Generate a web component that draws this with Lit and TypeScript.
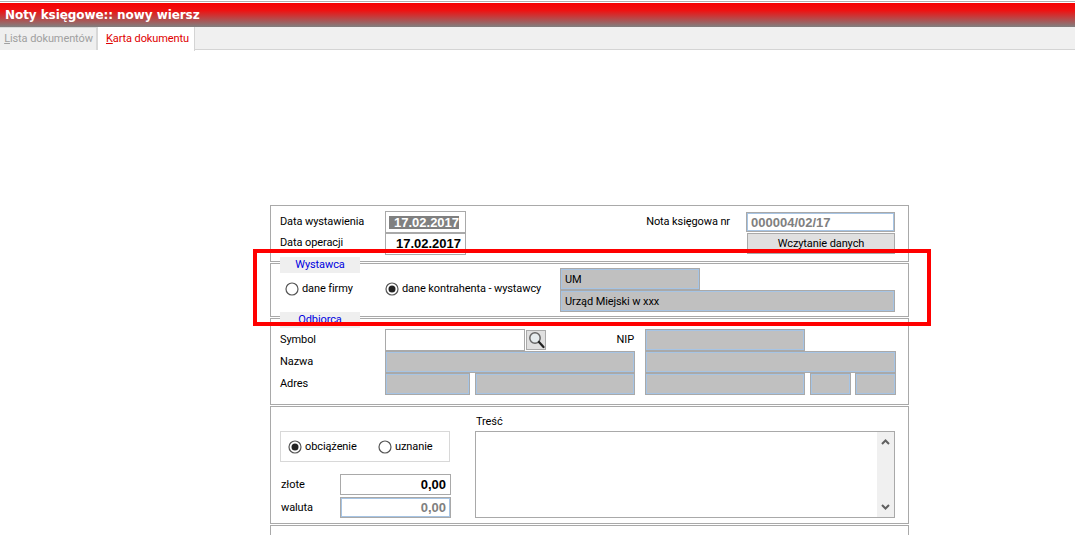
import { LitElement, html, css, svg } from "lit";
import { customElement } from "lit/decorators.js";

const radio = (on: boolean) => html`<svg class="radio" width="14" height="14" viewBox="0 0 14 14">
  <circle cx="7" cy="7" r="6" fill="#fff" stroke="#555" stroke-width="1.2"></circle>
  ${on ? svg`<circle cx="7" cy="7" r="3.5" fill="#222"></circle>` : ""}
</svg>`;

@customElement("app-root")
export class AppRoot extends LitElement {
  static styles = css`
    :host { display: block; width: 1075px; height: 535px; overflow: hidden; position: relative; background: #fff;
      font-family: Roboto, "Liberation Sans", Arial, sans-serif; font-size: 11px; letter-spacing: -0.1px; color: #000; white-space: nowrap; }
    .top { height: 3px; box-sizing: border-box; background: #fff; border-top: 1px solid #fff; }
    .top div { height: 1px; background: #b0b0b0; }
    .titlebar { height: 24px; box-sizing: border-box; background: linear-gradient(#f60000 0%, #f01010 30%, #808080 100%);
      color: #fff; font: bold 12px "DejaVu Sans", sans-serif; letter-spacing: -0.07px; display: flex; align-items: center; padding-left: 5px; }
    .tabs { height: 23px; box-sizing: border-box; background: #f0f0f0; border-bottom: 1px solid #d4d4d4; display: flex; }
    .tab { box-sizing: border-box; height: 23px; display: flex; align-items: center; justify-content: center; padding-bottom: 2px; }
    .tab u { text-decoration: underline; }
    .t1 { width: 98px; color: #a0a0a0; border: 1px solid #d8d8d8; border-width: 1px 2px 0 0; background: #efefef; padding-left: 1px; }
    .t2 { width: 97px; color: #e00000; background: #fff; border-right: 1px solid #d4d4d4; margin-bottom: -1px; height: 24px; padding-left: 3px; }
    .form { margin: 155px 0 0 270px; width: 639px; display: flex; flex-direction: column; }
    .panel { box-sizing: border-box; border: 1px solid #a9a9a9; position: relative; }
    .p1 { height: 57px; margin-bottom: 1px; }
    .p2 { height: 54px; margin-bottom: 1px; }
    .p3 { height: 87px; margin-bottom: 1px; }
    .p4 { height: 118px; margin-bottom: 1px; }
    .p5 { height: 40px; }
    .legend { position: absolute; left: 9px; top: -7px; width: 80px; height: 16px; background: #efefef; color: #0000e0; text-align: center; line-height: 15px; }
    .row { display: flex; align-items: center; box-sizing: border-box; }
    .lbl { width: 114px; padding: 0 0 2px 9px; box-sizing: border-box; flex: none; }
    .f { box-sizing: border-box; border: 1px solid #a9a9a9; flex: none; height: 22px; display: flex; align-items: center; }
    .ro { background: #c0c0c0; box-shadow: inset 0 0 0 1px #a6c4e4; padding-left: 4px; }
    .w { background: #fff; }
    .date { width: 81px; height: 22px; font: bold 13px "Liberation Sans", sans-serif; letter-spacing: 0; justify-content: flex-end; padding-right: 4px; }
    .sel { background: #808080; color: #fff; padding-left: 5px; margin-right: 2px; line-height: 13px; width: 65px; white-space: nowrap; }
    .p1 .r1 { padding-top: 5px; height: 27px; }
    .p1 .r2 { height: 21px; }
    .nr { margin-left: auto; margin-right: 16px; padding-bottom: 2px; }
    .nrin { width: 149px; height: 20px; margin-right: 13px; background: #fff; box-shadow: inset 0 0 0 1px #a6c4e4; color: #808080; font: bold 13px "Liberation Sans", sans-serif; letter-spacing: 0; padding-left: 4px; }
    .btn { width: 148px; height: 21px; margin: 0 13px 0 auto; background: #e0e0e0; justify-content: center; }
    .p2 .content { display: flex; align-items: center; height: 52px; padding-left: 14px; }
    .opt { display: flex; align-items: center; gap: 3px; flex: none; }
    .p2 .opt { margin-bottom: 3px; }
    .opt1 { width: 100px; }
    .opt2 { width: 175px; }
    .opts { display: flex; flex-direction: column; width: 335px; }
    .um { width: 140px; }
    .ur { width: 335px; }
    .p3 .body { padding-top: 10px; display: flex; flex-direction: column; }
    .p3 .row > .f { height: 22px; }
    .search { width: 20px; height: 20px; margin-left: 1px; background: #e0e0e0; border: 1px solid #a9a9a9; box-sizing: border-box; display: flex; align-items: center; justify-content: center; flex: none; }
    .nip { width: 88px; text-align: right; flex: none; margin-right: 11px; padding-bottom: 2px; box-sizing: content-box; }
    .p4 { display: flex; }
    .left { width: 204px; flex: none; padding: 24px 0 0 9px; box-sizing: border-box; display: flex; flex-direction: column; }
    .group { width: 170px; height: 31px; box-sizing: border-box; border: 1px solid #d8d8d8; display: flex; align-items: center; padding-left: 7px; }
    .money { display: flex; align-items: center; margin-top: 2px; }
    .money span { width: 60px; flex: none; padding: 0 0 0 1px; box-sizing: border-box; }
    .money .f { width: 111px; height: 21px; justify-content: flex-end; padding-right: 4px; font: bold 13px "Liberation Sans", sans-serif; letter-spacing: 0; }
    .m2 { color: #808080; background: #fff; box-shadow: inset 0 0 0 1px #a6c4e4; }
    .right { padding-left: 0; flex: none; width: 420px; }
    .tt { height: 24px; padding: 8px 0 0 1px; box-sizing: border-box; margin-left: 0; }
    .ta { width: 420px; height: 87px; box-sizing: border-box; border: 1px solid #a9a9a9; display: flex; justify-content: flex-end; }
    .sb { width: 17px; background: #f0f0f0; display: flex; flex-direction: column; justify-content: space-between; align-items: center; padding: 7px 0; box-sizing: border-box; }
    .mark { position: absolute; left: 253px; top: 249px; width: 678px; height: 77px; box-sizing: border-box; border: 4px solid #f00; pointer-events: none; }
    .radio { flex: none; }
  `;

  render() {
    const ro = (w: number, t = "") => html`<div class="f ro" style="width:${w}px">${t}</div>`;
    return html`
      <div class="top"><div></div></div>
      <div class="titlebar">Noty księgowe:: nowy wiersz</div>
      <div class="tabs">
        <div class="tab t1"><span><u>L</u>ista dokumentów</span></div>
        <div class="tab t2"><span><u>K</u>arta dokumentu</span></div>
      </div>
      <div class="form">
        <div class="panel p1">
          <div class="row r1">
            <div class="lbl">Data wystawienia</div>
            <div class="f date"><span class="sel">17.02.2017</span></div>
            <div class="nr">Nota księgowa nr</div>
            <div class="f nrin">000004/02/17</div>
          </div>
          <div class="row r2">
            <div class="lbl">Data operacji</div>
            <div class="f date">17.02.2017</div>
            <div class="f btn">Wczytanie danych</div>
          </div>
        </div>
        <div class="panel p2">
          <div class="legend">Wystawca</div>
          <div class="content">
            <div class="opt opt1">${radio(false)}dane firmy</div>
            <div class="opt opt2">${radio(true)}dane kontrahenta - wystawcy</div>
            <div class="opts">
              <div class="f ro um">UM</div>
              <div class="f ro ur">Urząd Miejski w xxx</div>
            </div>
          </div>
        </div>
        <div class="panel p3">
          <div class="legend">Odbiorca</div>
          <div class="body">
            <div class="row">
              <div class="lbl">Symbol</div>
              <div class="f w" style="width:140px"></div>
              <div class="search">
                <svg width="18" height="18" viewBox="0 0 18 18">
                  <circle cx="8" cy="7" r="5.2" fill="#e6ecee" stroke="#666" stroke-width="1.5"></circle>
                  <path d="M12 11l4.5 5" stroke="#222" stroke-width="2.2" stroke-linecap="round"></path>
                </svg>
              </div>
              <div class="nip">NIP</div>
              ${ro(160)}
            </div>
            <div class="row">
              <div class="lbl">Nazwa</div>
              ${ro(250)}
              <div style="width:10px"></div>
              ${ro(251)}
            </div>
            <div class="row">
              <div class="lbl">Adres</div>
              ${ro(85)}
              <div style="width:5px"></div>
              ${ro(160)}
              <div style="width:10px"></div>
              ${ro(160)}
              <div style="width:5px"></div>
              ${ro(41)}
              <div style="width:4px"></div>
              ${ro(41)}
            </div>
          </div>
        </div>
        <div class="panel p4">
          <div class="left">
            <div class="group">
              <div class="opt" style="width:90px">${radio(true)}obciążenie</div>
              <div class="opt">${radio(false)}uznanie</div>
            </div>
            <div class="money" style="margin-top:12px"><span>złote</span><div class="f w">0,00</div></div>
            <div class="money"><span>waluta</span><div class="f m2">0,00</div></div>
          </div>
          <div class="right">
            <div class="tt">Treść</div>
            <div class="ta">
              <div class="sb">
                <svg width="9" height="6" viewBox="0 0 9 6"><path d="M1 5l3.5-3.5L8 5" fill="none" stroke="#606060" stroke-width="2"></path></svg>
                <svg width="9" height="6" viewBox="0 0 9 6"><path d="M1 1l3.5 3.5L8 1" fill="none" stroke="#606060" stroke-width="2"></path></svg>
              </div>
            </div>
          </div>
        </div>
        <div class="panel p5"></div>
      </div>
      <div class="mark"></div>
    `;
  }
}
